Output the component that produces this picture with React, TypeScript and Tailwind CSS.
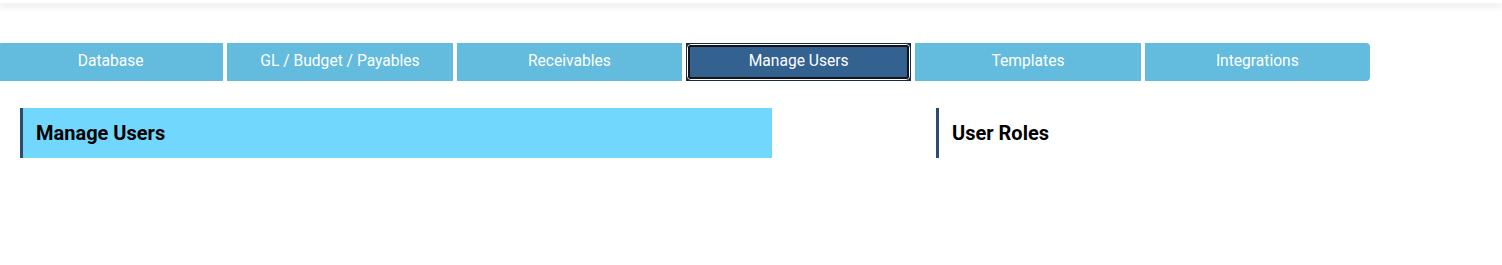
import React from "react";

const tabs = ["Database", "GL / Budget / Payables", "Receivables", "Manage Users", "Templates", "Integrations"];

export default function App() {
  return (
    <div className="w-[1502px] h-[265px] bg-white overflow-hidden" style={{ fontFamily: "Roboto, 'Liberation Sans', sans-serif" }}>
      <div className="h-[3px] bg-white shadow-[0_2px_8px_rgba(0,0,0,0.2)]" />
      <div className="pt-[40px]">
        <div className="-ml-[2px] w-[1372px] grid grid-cols-6 gap-[4px]">
          {tabs.map((t, i) => {
            const active = t === "Manage Users";
            if (active) {
              return (
                <div key={t} className="h-[38px] bg-[#1c2b3b] p-px">
                  <div className="h-full rounded-[4px] border border-white">
                    <div className="h-full rounded-[3px] border-2 border-[#111418] bg-[#336190] flex items-center justify-center text-white text-[15.6px]">
                      {t}
                    </div>
                  </div>
                </div>
              );
            }
            return (
              <div
                key={t}
                className={
                  "h-[38px] bg-[#63bbdd] flex items-center justify-center text-white text-[15.6px] pb-px " +
                  (i === 0 ? "rounded-l-[4px] " : "") +
                  (i === tabs.length - 1 ? "rounded-r-[4px]" : "")
                }
              >
                {t}
              </div>
            );
          })}
        </div>
      </div>
      <div className="flex pl-[20px] pt-[27px] gap-[164px]">
        <div className="w-[752px] h-[50px] bg-[#71d7fd] border-l-[3px] border-[#2b4b6f] flex items-center pl-[13px]">
          <span className="text-[20px] font-bold text-black">Manage Users</span>
        </div>
        <div className="flex-1 h-[50px] border-l-[3px] border-[#2b4b6f] flex items-center pl-[13px]">
          <span className="text-[20px] font-bold text-black">User Roles</span>
        </div>
      </div>
    </div>
  );
}
